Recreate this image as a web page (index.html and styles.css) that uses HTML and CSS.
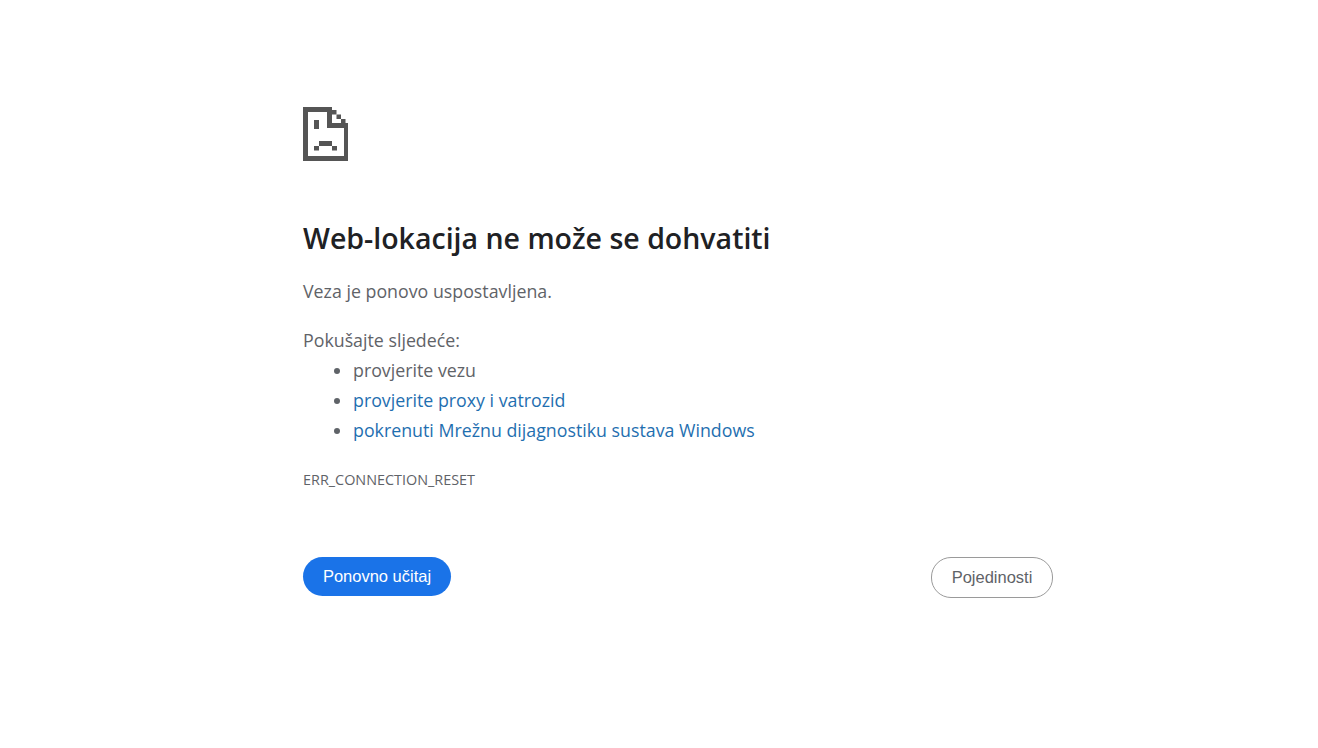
FILE: index.html
```html
<!doctype html>
<html lang="hr">
  <head>
    <title>Web-lokacija ne može se dohvatiti</title>
    <meta http-equiv="Content-Type" content="text/html; charset=utf-8" />
    <link rel="stylesheet" href="styles.css">
  </head>
  <body>
    <div class="wrapper">
      <svg class="sad-icon" width="45" height="54" viewBox="0 0 45 54" fill="#555">
        <rect x="0" y="0" width="29" height="5" />
        <rect x="0" y="0" width="5" height="54" />
        <rect x="0" y="49" width="45" height="5" />
        <rect x="41" y="16" width="4" height="38" />
        <rect x="24" y="0" width="5" height="21" />
        <rect x="24" y="16" width="21" height="5" />
        <rect x="29" y="3" width="4.5" height="4.5" />
        <rect x="33.5" y="7.5" width="4.5" height="4.5" />
        <rect x="38" y="12" width="4.5" height="4.5" />
        <rect x="11" y="13" width="5" height="9" />
        <rect x="16" y="34" width="13" height="5" />
        <rect x="11" y="39" width="5" height="4.5" />
        <rect x="29" y="39" width="5" height="4.5" />
      </svg>
      <h1>Web-lokacija ne može se dohvatiti</h1>
      <p class="reason">Veza je ponovo uspostavljena.</p>
      <div class="suggestions">
        <p>Pokušajte sljedeće:</p>
        <ul>
          <li>provjerite vezu</li>
          <li><a href="#">provjerite proxy i vatrozid</a></li>
          <li><a href="#">pokrenuti Mrežnu dijagnostiku sustava Windows</a></li>
        </ul>
      </div>
      <div class="error-code">ERR_CONNECTION_RESET</div>
      <div class="buttons">
        <button class="btn btn-reload">Ponovno učitaj</button>
        <button class="btn btn-details">Pojedinosti</button>
      </div>
    </div>
  </body>
</html>
```

FILE: styles.css
```css
* {
  margin: 0;
  padding: 0;
  box-sizing: border-box;
}
body {
  background-color: #fff;
  font-family: "Open Sans", "Noto Sans", sans-serif;
  color: #5f6368;
}
.wrapper {
  width: 750px;
  margin-left: 303px;
  padding-top: 107px;
}
.sad-icon {
  display: block;
}
h1 {
  margin-top: 57px;
  font-size: 28.5px;
  line-height: 40px;
  font-weight: 600;
  color: #202124;
}
.reason {
  margin-top: 18px;
  font-size: 17.8px;
  line-height: 30px;
}
.suggestions {
  margin-top: 19px;
  font-size: 17.8px;
  line-height: 30px;
}
ul {
  padding-left: 50px;
}
a {
  color: #1f6fb0;
  text-decoration: none;
}
.error-code {
  margin-top: 25px;
  font-size: 14.4px;
  line-height: 20px;
}
.buttons {
  margin-top: 67px;
  display: flex;
  justify-content: space-between;
  align-items: flex-start;
}
.btn {
  font-family: "Liberation Sans", Arial, sans-serif;
  font-size: 16.5px;
  border-radius: 20px;
  background: #fff;
}
.btn-reload {
  width: 148px;
  height: 39px;
  border: 0;
  background: #1a73e8;
  color: #fff;
}
.btn-details {
  width: 122px;
  height: 41px;
  border: 1px solid #9a9a9a;
  color: #5f6368;
}
```
